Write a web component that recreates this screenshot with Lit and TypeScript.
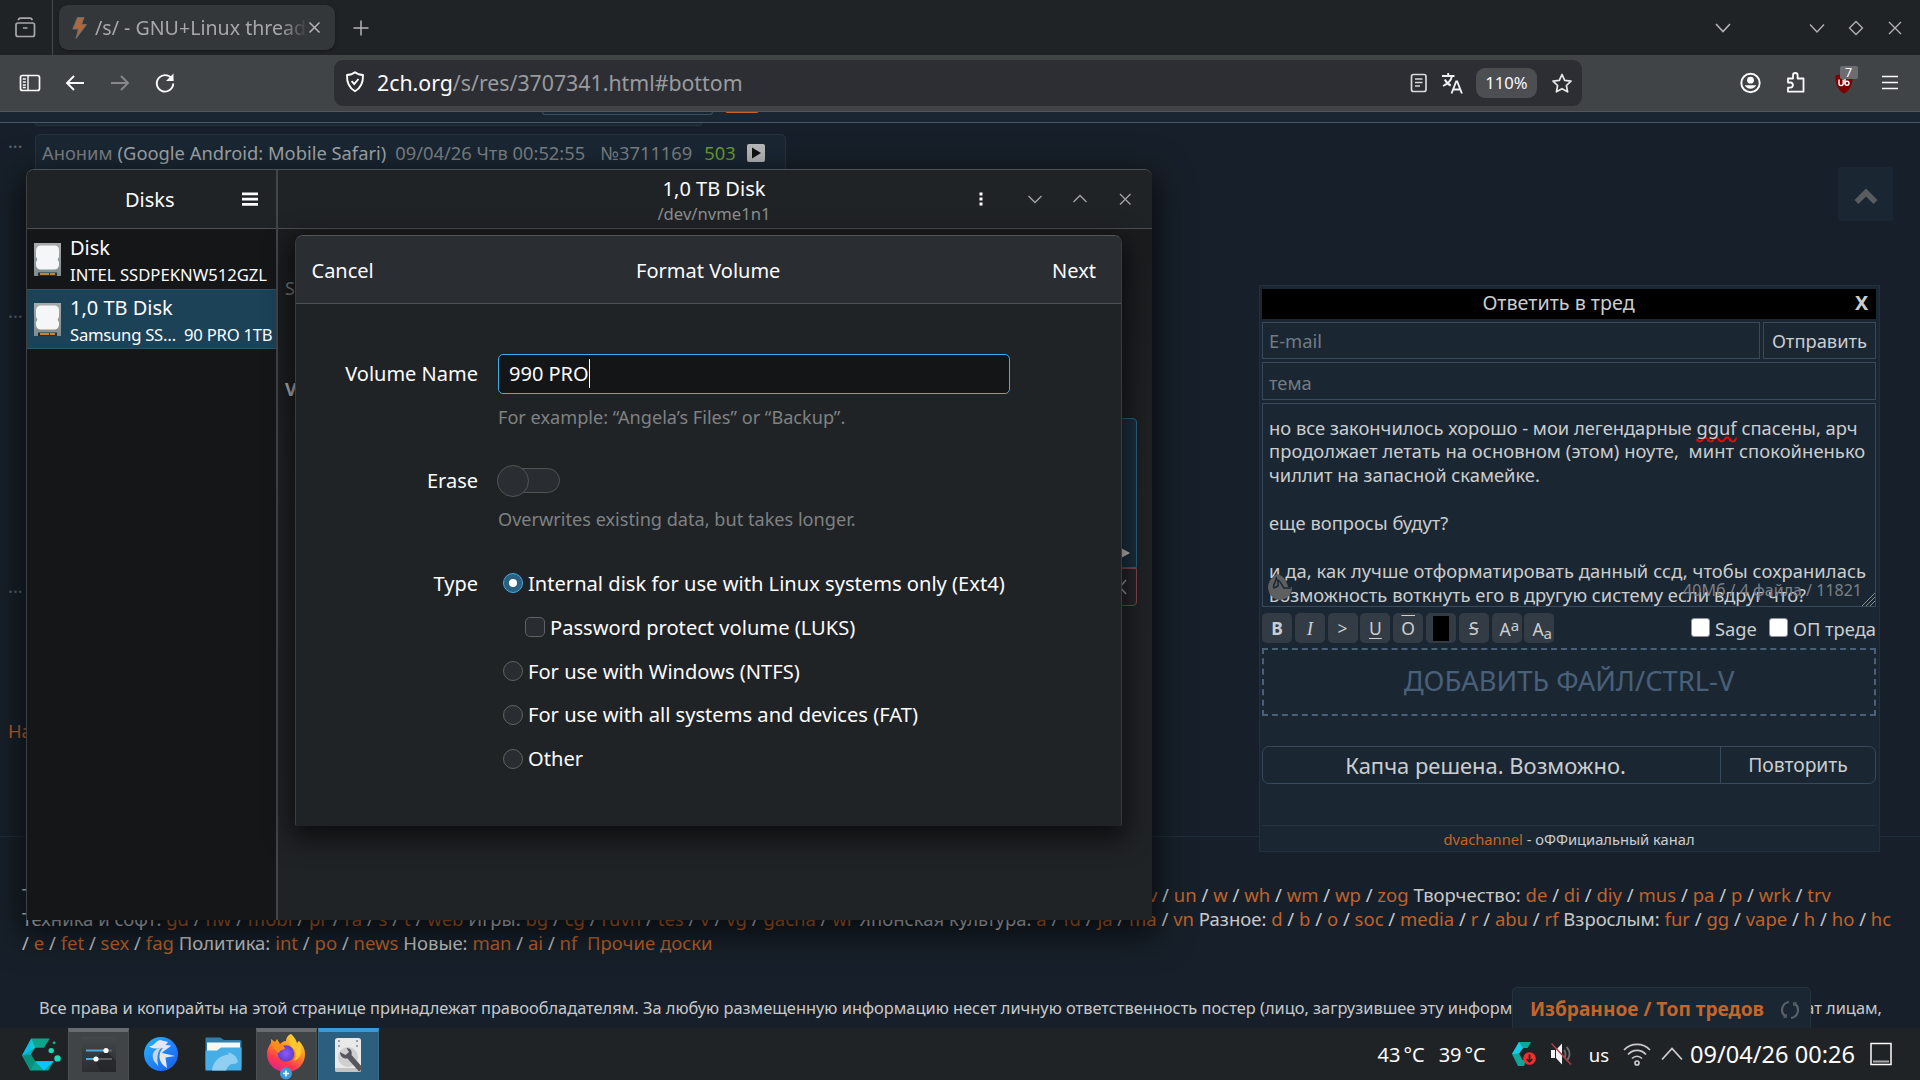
import { LitElement, html, css, nothing } from "lit";
import { customElement } from "lit/decorators.js";

const BOARDS_TAIL = "v un w wh wm wp zog|Творчество: de di diy mus pa p wrk trv";
const BOARDS_2 =
  "Техника и софт: gd hw mobi pr ra s t web|Игры: bg cg ruvn tes v vg gacha wr|Японская культура: a fd ja ma vn|Разное: d b o soc media r abu rf|Взрослым: fur gg vape h ho hc";
const BOARDS_3 = "/ e fet sex fag|Политика: int po news|Новые: man ai nf";

/* Turns "Title: a b c|Title: d e" into headed lists of board links. */
const boards = (src: string) =>
  src.split("|").map((group, gi) => {
    const m = group.match(/^([А-Яа-я ]+:|\/)?\s*(.*)$/)!;
    const links = m[2].split(" ");
    return html`${gi ? " " : nothing}${m[1] ? m[1] + " " : nothing}${links.map(
      (l, i) => html`${i ? " / " : nothing}<a>${l}</a>`
    )}`;
  });

@customElement("browser-chrome")
class BrowserChrome extends LitElement {
  static styles = css`
    :host { display: block; color: #a6a8a9; font-family: "Noto Sans", sans-serif; }
    svg { display: block; flex: none; }
    .tabs { height: 55px; background: #202326; display: flex; align-items: center; box-sizing: border-box; }
    .recent { width: 53px; height: 55px; border-right: 1px solid #46494c; display: flex; align-items: center; justify-content: center; padding-right: 2px; box-sizing: border-box; }
    .tab { margin-left: 6px; width: 276px; height: 45px; border-radius: 9px; background: #34373a; display: flex; align-items: center; padding: 0 13px 0 13px; box-sizing: border-box; box-shadow: 0 1px 3px #0006; }
    .title { width: 211px; margin-left: 8px; font-size: 19.6px; white-space: nowrap; overflow: hidden; -webkit-mask-image: linear-gradient(90deg, #000 88%, transparent 101%); mask-image: linear-gradient(90deg, #000 88%, transparent 101%); }
    .tab .x { margin-left: 2px; }
    .plus { margin-left: 17px; }
    .winbtns { margin-left: auto; display: flex; align-items: center; padding-right: 15px; }
    .winbtns svg + svg { margin-left: 19px; }
    .winbtns .list { margin-right: 56px; }
    .bar { height: 56px; background: #414446; border-bottom: 1px solid #55585a; display: flex; align-items: center; box-sizing: content-box; color: #fbfbfb; }
    .nav { display: flex; width: 334px; align-items: center; gap: 21px; padding-left: 18px; box-sizing: border-box; }
    .dim { color: #86888a; }
    .url { width: 1248px; height: 46px; border-radius: 9px; background: #2d2e33; display: flex; align-items: center; box-sizing: border-box; padding: 0 9px 0 9px; }
    .shield { margin-top: -3px; }
    .addr { margin: -2px 0 0 10px; font-size: 21.3px; color: #9a9b9d; white-space: pre; flex: 1; }
    .addr b { font-weight: 400; color: #fbfbfe; }
    .tr { margin-left: 13px; }
    .zoom { background: #4d4e52; width: 61px; height: 30px; border-radius: 9px; font-size: 16.6px; line-height: 30px; text-align: center; margin: 0 14px 0 12px; }
    .ext { display: flex; align-items: center; margin-left: auto; gap: 22.5px; padding-right: 18px; }
    .ublock { position: relative; display: flex; }
    .count { position: absolute; left: 8px; top: -5px; width: 18px; height: 13px; line-height: 13px; border-radius: 2px; background: #6b6d70; font-size: 12.5px; text-align: center; }
  `;
  render() {
    return html`
      <div class="tabs">
        <div class="recent">
          <svg width="24" height="24" viewBox="0 0 24 24" fill="none" stroke="currentColor" stroke-width="1.7"><rect x="3" y="7" width="18.500" height="13.500" rx="2"></rect><path d="M5.500 4.200q0-2 2-2h9.500q2 0 2 2M10 12h4.500"></path></svg>
        </div>
        <div class="tab">
          <svg width="15" height="22" viewBox="0 0 15 22"><path d="M5.500 0.500H12L9.500 7.500H14.500L4 21.500L6.500 12H0.800Z" fill="#b0673a" stroke="#6d6e70" stroke-width="1"></path></svg>
          <div class="title">/s/ - GNU+Linux thread</div>
          <svg class="x" width="13" height="13" viewBox="0 0 13 13" stroke="#b4b5b6" stroke-width="1.5"><path d="M1.500 1.500l10 10M11.500 1.500l-10 10"></path></svg>
        </div>
        <svg class="plus" width="18" height="18" viewBox="0 0 18 18" stroke="#b4b5b6" stroke-width="1.500"><path d="M9 1.500v15M1.500 9h15"></path></svg>
        <div class="winbtns">
          <svg class="list" width="18" height="18" viewBox="0 0 18 18" fill="none" stroke="#b4b5b6" stroke-width="1.600"><path d="M2 5l7 7.500L16 5"></path></svg>
          <svg width="20" height="18" viewBox="0 0 20 18" fill="none" stroke="#b4b5b6" stroke-width="1.300"><path d="M3 5.500l7 7.500L17 5.500"></path></svg>
          <svg width="20" height="18" viewBox="0 0 20 18" fill="none" stroke="#b4b5b6" stroke-width="1.300"><path d="M10 2.500l6.500 6.500L10 15.500L3.500 9Z"></path></svg>
          <svg width="20" height="18" viewBox="0 0 20 18" fill="none" stroke="#b4b5b6" stroke-width="1.300"><path d="M4 3l12 12M16 3L4 15"></path></svg>
        </div>
      </div>
      <div class="bar">
        <div class="nav">
          <svg width="24" height="18" viewBox="0 0 24 18" fill="none" stroke="currentColor" stroke-width="1.700"><rect x="2.500" y="1.500" width="19" height="15" rx="2"></rect><path d="M10 1.500v15M4.800 5h3M4.800 8h3M4.800 11h3M4.800 13.500h3" stroke-width="1.400"></path></svg>
          <svg width="24" height="24" viewBox="0 0 24 24" fill="none" stroke="currentColor" stroke-width="1.900"><path d="M21 12H4.500M11 5l-7 7l7 7"></path></svg>
          <svg class="dim" width="24" height="24" viewBox="0 0 24 24" fill="none" stroke="currentColor" stroke-width="1.900"><path d="M3 12h16.500M13 5l7 7l-7 7"></path></svg>
          <svg width="24" height="24" viewBox="0 0 24 24" fill="none" stroke="currentColor" stroke-width="1.900"><path d="M19.700 9.500A8.200 8.200 0 1 0 20.200 12.500"></path><path d="M20.500 2.500V10H13Z" fill="currentColor" stroke="none"></path></svg>
        </div>
        <div class="url">
          <svg class="shield" width="24" height="24" viewBox="0 0 24 24" fill="none" stroke="currentColor" stroke-width="1.900"><path d="M12 2.200c2.300 2 5 2.500 8 2.800c.3 7.500-2 12.800-8 16.300C6 17.800 3.700 12.500 4 5c3-.3 5.700-.8 8-2.800Z" stroke-linejoin="round"></path><path d="M8.600 11.200l2.600 2.800l4.300-5"></path></svg>
          <div class="addr"><b>2ch.org</b>/s/res/3707341.html#bottom</div>
          <svg width="18" height="20" viewBox="0 0 18 20" fill="none" stroke="#d8d8da" stroke-width="1.700"><rect x="1.500" y="1.500" width="14.500" height="17" rx="2"></rect><path d="M5 6h7.500M5 9.500h7.500M5 13h5" stroke-width="1.500"></path></svg>
          <svg class="tr" width="23" height="23" viewBox="0 0 23 23" fill="none" stroke="#f0f0f2" stroke-width="1.900"><g transform="translate(1 1)"><path d="M0 3h12.500M6.200 0v3M10 3c-1 5-4.500 8-9 10M2.800 6.500c1.500 3 3.500 5 6 6M9.500 20.500l4.700-12h1l4.700 12M11.200 16.500h7"></path></g></svg>
          <div class="zoom">110%</div>
          <svg width="22" height="21" viewBox="0 0 22 21" fill="none" stroke="#e8e8ea" stroke-width="1.700" stroke-linejoin="round"><path d="M11 1.500l2.700 5.800l6.300.8l-4.600 4.400l1.200 6.300L11 15.700l-5.600 3.100l1.200-6.300L2 8.100l6.300-.8Z"></path></svg>
        </div>
        <div class="ext">
          <svg width="24" height="24" viewBox="0 0 24 24" fill="none"><circle cx="11.500" cy="12" r="9.200" stroke="#fbfbfb" stroke-width="1.900"></circle><circle cx="11.500" cy="9.200" r="3.400" fill="#fbfbfb"></circle><path d="M5.800 14.300h11.400a6.500 6.500 0 0 1-11.400 0Z" fill="#fbfbfb"></path></svg>
          <svg width="24" height="24" viewBox="0 0 24 24" fill="none" stroke="#fbfbfb" stroke-width="1.800" stroke-linejoin="round"><path d="M3 7.500h5V4.300a2.300 2.300 0 0 1 4.600 0V7.500H18.500v13.200H3v-4h2.300a2.600 2.600 0 0 0 0-5.200H3Z"></path></svg>
          <div class="ublock">
            <svg width="24" height="24" viewBox="0 0 24 24"><path d="M12 2c2.500 1.600 5 2 8.500 2.200C21 13 18 19.500 12 22.500C6 19.500 3 13 3.500 4.200C7 4 9.500 3.600 12 2Z" fill="#800000"></path><path d="M7 8.500v4a2 2 0 0 0 4.200 0v-4M13 7v5.500" fill="none" stroke="#fff" stroke-width="1.400"></path><circle cx="15" cy="12.300" r="2" fill="none" stroke="#fff" stroke-width="1.400"></circle></svg>
            <div class="count">7</div>
          </div>
          <svg width="24" height="24" viewBox="0 0 24 24" stroke="#fbfbfb" stroke-width="1.700"><path d="M4 5.500h16M4 11.500h16M4 17.500h16"></path></svg>
        </div>
      </div>
    `;
  }
}

@customElement("thread-page")
class ThreadPage extends LitElement {
  static styles = css`
    :host { display: block; height: 916px; overflow: hidden; background: #17202a; color: #c7c9cb; font-family: "Noto Sans", sans-serif; font-size: 18.33px; position: relative; }
    .strip { height: 10px; background: #1a2733; border-bottom: 1px solid #44586a; display: flex; align-items: flex-start; }
    .search { margin-left: 542px; width: 171px; height: 3px; border: 1px solid #3c5063; border-top: 0; border-radius: 0 0 5px 5px; box-sizing: border-box; }
    .go { margin-left: 13px; width: 32px; height: 1px; background: #c4652a; border-radius: 0 0 4px 4px; }
    .prev { margin-left: 35px; width: 667px; height: 3px; background: #1a2733; border: 1px solid #26333f; border-top: 0; border-radius: 0 0 5px 5px; box-sizing: border-box; }
    .row { display: flex; margin-top: 8px; height: 156px; }
    .dots { width: 35px; box-sizing: border-box; padding-left: 8px; color: #5e666d; font-size: 18px; line-height: 14px; }
    .post { width: 751px; box-sizing: border-box; background: #1a2733; border: 1px solid #26333f; border-radius: 5px; color: #7c8083; height: 150px; padding: 0 6px; display: flex; align-items: flex-start; line-height: 36px; white-space: nowrap; }
    .who { color: #a4a7a9; margin: 0 9px 0 5px; }
    .no { margin-left: 15px; }
    .num { color: #6c9a3a; margin-left: 12px; }
    .play { margin: 9px 0 0 11px; }
    .col { display: flex; flex-direction: column; }
    .d2 { margin-top: 14px; height: 275px; padding-left: 8px; color: #5e666d; line-height: 14px; }
    .d3 { height: 140px; padding-left: 8px; color: #5e666d; line-height: 14px; }
    .back { padding-left: 8px; color: #b05f2a; line-height: 24px; height: 117px; }
    .rule { border-top: 1px solid #1e2d3a; height: 46px; }
    .boards { padding-left: 22px; line-height: 24px; height: 114px; width: 1890px; font-size: 18.490px; }
    .boards div { white-space: pre; }
    .l1 { display: flex; justify-content: space-between; width: 1809px; }
    .boards a, .back a { color: #bf632a; }
    .copy { font-size: 16.4px; line-height: 24px; white-space: nowrap; margin-top: -1px; }
    .c1 { display: flex; justify-content: space-between; padding: 0 38px 0 39px; }
    .c2 { text-align: center; }
    .top { position: absolute; left: 1838px; top: 55px; width: 55px; height: 54px; background: #1a2733; border-radius: 3px; display: flex; align-items: center; justify-content: center; padding-top: 4px; box-sizing: border-box; }
    .fav { position: absolute; left: 1512px; top: 875px; width: 299px; height: 50px; box-sizing: border-box; background: #1a2733; border: 1px solid #25333f; border-radius: 5px 5px 0 0; display: flex; align-items: flex-start; padding: 6px 10px 0 17px; color: #c4652a; font-weight: 700; font-size: 19.1px; line-height: 30px; white-space: nowrap; justify-content: space-between; }
    .fav svg { margin-top: 6px; }
    svg { display: block; }
  `;
  render() {
    return html`
      <div class="strip"><div class="search"></div><div class="go"></div></div>
      <div class="prev"></div>
      <div class="row">
        <div class="dots">...</div>
        <div class="post"><span>Аноним</span><span class="who">(Google Android: Mobile Safari)</span><span>09/04/26 Чтв 00:52:55</span><span class="no">№3711169</span><span class="num">503</span>
          <svg class="play" width="18" height="18" viewBox="0 0 18 18"><rect width="18" height="18" rx="2" fill="#b9babb"></rect><path d="M5 3.500L14 9L5 14.500Z" fill="#111"></path></svg></div>
      </div>
      <div class="col">
        <div class="d2">...</div>
        <div class="d3">...</div>
        <div class="back"><a>Назад</a></div>
      </div>
      <div class="rule"></div>
      <div class="boards">
        <div class="l1"><span>Тематика:</span><span>${boards(BOARDS_TAIL)}</span></div>
        <div>${boards(BOARDS_2)}</div>
        <div>${boards(BOARDS_3)}<a>  Прочие доски</a></div>
      </div>
      <div class="copy">
        <div class="c1"><span>Все права и копирайты на этой странице принадлежат правообладателям. За любую размещенную информацию несет личную ответственность постер (лицо, загрузившее эту информацию)</span><span>лежат лицам,</span></div>
        <div class="c2">отправившим их</div>
      </div>
      <div class="top"><svg width="24" height="20" viewBox="0 0 24 20" fill="none" stroke="#5a5d60" stroke-width="5.500"><path d="M2.500 16L12 6.500L21.500 16"></path></svg></div>
      <reply-form></reply-form>
      <div class="fav">Избранное / Топ тредов
        <svg width="20" height="20" viewBox="0 0 20 20" fill="none" stroke="#596066" stroke-width="2.200"><path d="M9 2A8 8 0 0 0 5.500 16.500M11 18A8 8 0 0 0 14.500 3.500"></path><path d="M3.500 17.500l3-.5l-.5-3M16.500 2.500l-3 .5l.5 3" stroke-width="1.200"></path></svg>
      </div>
    `;
  }
}

@customElement("reply-form")
class ReplyForm extends LitElement {
  static styles = css`
    :host { position: absolute; left: 1259px; top: 173px; width: 621px; height: 567px; box-sizing: border-box; border: 1px solid #22303c; background: #1a2733; padding: 3px 3px 0 2px; display: flex; flex-direction: column; color: #cbcdce; font-size: 18.33px; }
    .head, .r1, .subj, .area, .tools, .drop, .cap, .foot { flex: none; }
    .head { height: 30px; background: #000; display: flex; align-items: center; font-size: 19.700px; line-height: 28px; padding-bottom: 2px; box-sizing: border-box; }
    .head span { flex: 1; text-align: center; }
    .head b { width: 21px; font-size: 19.700px; }
    .r1 { display: flex; gap: 3px; margin-top: 3px; height: 37px; }
    .in { border: 1px solid #37495a; box-sizing: border-box; padding-left: 6px; display: flex; align-items: center; color: #747b82; font-size: 18.33px; }
    .mail { width: 498px; }
    .send { flex: 1; padding: 0; justify-content: center; color: #cbcdce; }
    .subj { margin-top: 3px; height: 38px; padding-top: 2px; }
    .area { margin-top: 3px; height: 204px; border: 1px solid #37495a; box-sizing: border-box; position: relative; padding: 11.500px 0 0 6px; line-height: 23.9px; font-size: 18.330px; overflow: hidden; }
    .area > div { white-space: pre; }
    .area .w { letter-spacing: 0.070px; }
    .sp { text-decoration: underline wavy #f00 1.5px; text-underline-offset: 1px; text-decoration-skip-ink: none; }
    .lim { position: absolute; right: 13px; bottom: 3px; color: #7a8086; font-size: 16px; }
    .grip { position: absolute; right: 0; bottom: 0; }
    .flame { position: absolute; left: 4px; bottom: 6px; }
    .tools { display: flex; height: 30px; margin-top: 6px; gap: 2.800px; align-items: center; }
    .t { width: 30px; height: 30px; box-sizing: border-box; border-radius: 5px; background: #333c44; text-align: center; line-height: 31px; font-size: 17.500px; white-space: nowrap; }
    .t i { font-family: "Liberation Serif", serif; font-size: 19px; }
    .t u { text-underline-offset: 3px; }
    .ov { text-decoration: overline; }
    .sw { display: flex; justify-content: center; align-items: center; }
    .sw span { width: 16px; height: 25px; background: #000; }
    .t sup, .t sub { font-size: 15px; line-height: 0; }
    .aa { text-align: left; padding-left: 8px; line-height: 33px; }
    .t sup { vertical-align: 5px; }
    .t sub { vertical-align: -3px; }
    .checks { margin-left: auto; display: flex; align-items: center; white-space: nowrap; font-size: 18.330px; }
    .cb { width: 19px; height: 19px; background: #fff; border: 1px solid #8f8f9d; border-radius: 3px; box-sizing: border-box; margin-right: 5px; margin-top: -2px; }
    .checks span + .cb { margin-left: 12px; }
    .drop { height: 68px; margin-top: 5px; border: 2px dashed #4a6079; box-sizing: border-box; display: flex; align-items: center; justify-content: center; font-size: 27.400px; color: #4a6079; padding-bottom: 3px; }
    .cap { margin-top: 30px; height: 38px; border: 1px solid #37495a; border-radius: 7px; box-sizing: border-box; display: flex; align-items: center; text-align: center; }
    .cap .a { width: 457px; box-sizing: border-box; padding-right: 12px; padding-top: 1px; font-size: 21.950px; }
    .cap .b { flex: 1; border-left: 1px solid #37495a; height: 36px; line-height: 35px; font-size: 19.300px; }
    .foot { margin-top: 41px; border-top: 1px solid #25333f; text-align: center; font-size: 14.700px; line-height: 26px; height: 26px; }
    .foot a { color: #c4652a; }
  `;
  render() {
    return html`
      <div class="head"><span>Ответить в тред</span><b>X</b></div>
      <div class="r1"><div class="in mail">E-mail</div><div class="in send">Отправить</div></div>
      <div class="in subj">тема</div>
      <div class="area"><div>но все закончилось хорошо - мои легендарные <span class="sp">gguf</span> спасены, арч</div><div class="w">продолжает летать на основном (этом) ноуте,  минт спокойненько</div><div>чиллит на запасной скамейке.</div><div>&nbsp;</div><div>еще вопросы будут?</div><div>&nbsp;</div><div class="w">и да, как лучше отформатировать данный ссд, чтобы сохранилась</div><div>возможность воткнуть его в другую систему если вдруг что?</div>
        <div class="lim">40Мб / 4 файла / 11821</div>
        <svg class="flame" width="26" height="26" viewBox="0 0 26 26" fill="#5e5f60"><path d="M10 0C15 1 20 6 21 13l4 0c.5 8-6 13-12.500 13C6 25.500 1 20 1 13C1 9 4 3 10 0Z"></path><path d="M9 3c2 3-4 7-2 11l4-2v-6c3 2 4 5 6 8l7 0" stroke="#1a2733" stroke-width="1.500" fill="none"></path></svg>
        <svg class="grip" width="14" height="14" viewBox="0 0 14 14" stroke="#8b9094" stroke-width="1"><path d="M1 14L14 1M5 14L14 5M9 14L14 9"></path></svg>
      </div>
      <div class="tools">
        <div class="t"><b>B</b></div><div class="t"><i>I</i></div><div class="t">&gt;</div><div class="t"><u>U</u></div>
        <div class="t ov">O</div><div class="t sw"><span></span></div><div class="t"><s>S</s></div>
        <div class="t aa">A<sup>a</sup></div><div class="t aa">A<sub>a</sub></div>
        <div class="checks"><div class="cb"></div><span>Sage</span><div class="cb"></div><span>ОП треда</span></div>
      </div>
      <div class="drop">ДОБАВИТЬ ФАЙЛ/CTRL-V</div>
      <div class="cap"><div class="a">Капча решена. Возможно.</div><div class="b">Повторить</div></div>
      <div class="foot"><a>dvachannel</a> - оФФициальный канал</div>
    `;
  }
}

const drive = html`<svg class="drive" width="27" height="33" viewBox="0 0 27 33"><defs><linearGradient id="dg" x1="0" y1="0" x2="0" y2="1"><stop offset="0" stop-color="#a9abac"></stop><stop offset="1" stop-color="#7f8c8d"></stop></linearGradient></defs><rect width="27" height="33" fill="url(#dg)"></rect><path d="M6 2.500h15Q25 3 25 7v7q-2.500 2.500 0 5v3q-.5 4-4 4.500H6Q2.500 26 2 22v-3q2.500-2.500 0-5V7Q2.500 3 6 2.500Z" fill="#f4f6f7"></path><rect x="4" y="29.500" width="19" height="3.500" fill="#2c2f31"></rect><path d="M6 31h9M16 31h5" stroke="#f0a63c" stroke-width="1.300"></path></svg>`;

@customElement("disks-window")
class DisksWindow extends LitElement {
  static styles = css`
    :host { position: absolute; left: 26px; top: 169px; width: 1126px; height: 751px; display: flex; background: #202326; border-radius: 8px 8px 0 0; overflow: visible; box-shadow: 0 10px 34px 6px #0009; box-sizing: border-box; border: 1px solid #3d4144; border-top-color: #4c5154; border-bottom: 0; border-right: 0; color: #fcfcfc; font-family: "Noto Sans", sans-serif; font-size: 20px; }
    svg { display: block; flex: none; }
    .side { width: 249px; border-right: 2px solid #434649; background: #151618; border-radius: 8px 0 0 0; overflow: hidden; }
    .head { height: 58px; border-bottom: 1px solid #4c4f52; background: #202326; display: flex; align-items: center; box-sizing: content-box; }
    .main .head { border-radius: 0 8px 0 0; }
    .side .head span { margin-left: 98px; width: 117px; }
    .row { height: 60px; display: flex; padding: 5px 0 0 7px; box-sizing: border-box; }
    .sel { background: #1c4257; box-shadow: inset 0 1px #28556c, inset 0 -1px #28556c; }
    .drive { margin: 9px 9px 0 0; }
    .nm { line-height: 27px; white-space: pre; }
    .sub { font-size: 16.670px; line-height: 27px; white-space: pre; }
    .sel .sub { letter-spacing: -0.250px; }
    .main { flex: 1; min-width: 0; }
    .ttl { flex: 1; text-align: center; padding: 7px 0 0 179px; }
    .ttl div:first-child { line-height: 25px; margin-top: -3px; }
    .dev { font-size: 16.670px; line-height: 26px; color: #8c8e8f; }
    .btns { display: flex; align-items: center; padding-right: 17px; gap: 25px; color: #a3a5a6; }
    .btns svg:first-child { margin-right: 9px; }
    .body { height: 691px; display: flex; justify-content: space-between; background: linear-gradient(#1a1c1e, #1f2224 40%, #202326); overflow: hidden; }
    .hid { padding: 46px 0 0 7px; line-height: 26px; color: #77797b; font-size: 18px; }
    .hid b { display: block; margin-top: 75px; color: #b8b9ba; }
    .vol { width: 60px; margin: 189px 15px 0 0; display: flex; flex-direction: column; }
    .part { height: 150px; background: #1b303d; border: 1px solid #2a6180; box-sizing: border-box; border-radius: 0 4px 0 0; display: flex; align-items: flex-end; justify-content: flex-end; padding: 0 6px 9px 0; }
    .del { height: 38px; border: 1px solid #84464b; box-sizing: border-box; background: #26262a; border-radius: 0 0 4px 0; display: flex; align-items: center; justify-content: flex-end; padding-right: 9px; }
  `;
  render() {
    return html`
      <div class="side">
        <div class="head"><span>Disks</span><svg width="16" height="14" viewBox="0 0 16 14" fill="#fcfcfc"><path d="M0 .5h16v2.700H0zM0 5.700h16v2.700H0zM0 11h16v2.700H0z"></path></svg></div>
        <div class="row">${drive}<div><div class="nm">Disk</div><div class="sub">INTEL SSDPEKNW512GZL</div></div></div>
        <div class="row sel">${drive}<div><div class="nm">1,0 TB Disk</div><div class="sub">Samsung SS…  90 PRO 1TB</div></div></div>
      </div>
      <div class="main">
        <div class="head">
          <div class="ttl"><div>1,0 TB Disk</div><div class="dev">/dev/nvme1n1</div></div>
          <div class="btns">
            <svg width="20" height="16" viewBox="0 0 20 16" fill="#fcfcfc"><path d="M8.500 1.500h3v3h-3zM8.500 6.500h3v3h-3zM8.500 11.500h3v3h-3z"></path></svg>
            <svg width="20" height="16" viewBox="0 0 20 16" fill="none" stroke="currentColor" stroke-width="1.300"><path d="M3.500 5l6.500 6.500L16.500 5"></path></svg>
            <svg width="20" height="16" viewBox="0 0 20 16" fill="none" stroke="currentColor" stroke-width="1.300"><path d="M3.500 11L10 4.500L16.500 11"></path></svg>
            <svg width="20" height="16" viewBox="0 0 20 16" fill="none" stroke="currentColor" stroke-width="1.300"><path d="M5 3l10.500 10.500M15.500 3L5 13.500"></path></svg>
          </div>
        </div>
        <div class="body">
          <div class="hid">Size<b>Volumes</b></div>
          <div class="vol">
            <div class="part"><svg width="9" height="10" viewBox="0 0 9 10" fill="#c8cacb"><path d="M0 0L9 5L0 10Z"></path></svg></div>
            <div class="del"><svg width="14" height="16" viewBox="0 0 14 16" fill="none" stroke="#a3a5a6" stroke-width="1.400"><path d="M1 1l12 14M13 1L1 15"></path></svg></div>
          </div>
        </div>
      </div>
    `;
  }
}

const TYPES: [string, string][] = [
  ["radio on", "Internal disk for use with Linux systems only (Ext4)"],
  ["check", "Password protect volume (LUKS)"],
  ["radio", "For use with Windows (NTFS)"],
  ["radio", "For use with all systems and devices (FAT)"],
  ["radio", "Other"],
];

@customElement("format-dialog")
class FormatDialog extends LitElement {
  static styles = css`
    :host { position: absolute; left: 295px; top: 235px; width: 827px; height: 591px; box-sizing: border-box; border: 1px solid #3a3d40; border-top-color: #515457; border-bottom: 0; border-radius: 8px 8px 2px 2px; background: #202326; overflow: visible; box-shadow: 0 8px 26px 4px #000000a6; color: #fcfcfc; font-family: "Noto Sans", sans-serif; font-size: 20px; }
    .head { height: 68px; background: #2a2d31; border-bottom: 1px solid #4e5154; border-radius: 7px 7px 0 0; display: grid; grid-template-columns: 1fr auto 1fr; align-items: center; padding: 1px 25px 0 15.5px; box-sizing: border-box; }
    .head span:nth-child(2) { padding-left: 9px; }
    .head span:last-child { text-align: right; }
    .grid { display: grid; grid-template-columns: 182px 512px; column-gap: 20px; align-items: center; }
    .lab { text-align: right; }
    .r1 { margin-top: 50px; }
    .r1 .lab { padding-bottom: 1px; }
    .entry { height: 40px; border: 1px solid #3daee9; border-radius: 5px; background: #141517; box-sizing: border-box; display: flex; align-items: center; padding: 0 0 1px 10px; }
    .caret { width: 1px; height: 29px; background: #fff; }
    .hint { margin: 12px 0 0 202px; font-size: 18.140px; line-height: 22px; color: #7f8182; white-space: nowrap; }
    .r2 { margin-top: 36px; }
    .sw { width: 63px; height: 25px; border: 1px solid #505356; background: #292c30; border-radius: 13px; box-sizing: border-box; display: flex; align-items: center; margin: 4px 0 3px -1px; }
    .knob { width: 32px; height: 32px; border-radius: 50%; box-sizing: border-box; background: #2a2d32; border: 1px solid #505356; flex: none; margin-left: -1px; }
    .r3 { margin-top: 32px; align-items: start; }
    .r3 .lab, .opt { height: 43.800px; line-height: 43.800px; }
    .opt { display: flex; align-items: center; white-space: nowrap; padding-left: 5px; font-size: 20.120px; }
    .box { width: 20px; height: 20px; box-sizing: border-box; border: 1px solid #606366; background: #292c30; border-radius: 50%; margin: -1px 5px 0 0; display: flex; align-items: center; justify-content: center; }
    .opt.check { padding-left: 27px; }
    .check .box { border-radius: 5px; margin-right: 5px; }
    .on .box { background: #2b607f; border-color: #3daee9; }
    .on .box::after { content: ""; width: 8px; height: 8px; border-radius: 50%; background: #fff; }
  `;
  render() {
    return html`
      <div class="head"><span>Cancel</span><span>Format Volume</span><span>Next</span></div>
      <div class="grid r1"><div class="lab">Volume Name</div><div class="entry">990 PRO<div class="caret"></div></div></div>
      <div class="hint">For example: “Angela’s Files” or “Backup”.</div>
      <div class="grid r2"><div class="lab">Erase</div><div class="sw"><div class="knob"></div></div></div>
      <div class="hint">Overwrites existing data, but takes longer.</div>
      <div class="grid r3"><div class="lab">Type</div><div>${TYPES.map(([k, t]) => html`<div class="opt ${k}"><div class="box"></div>${t}</div>`)}</div></div>
    `;
  }
}

const cachy = html`<svg width="40" height="33" viewBox="0 0 40 34">
  <path d="M10 0.500H29L23 10H14L9.500 17L14 24H33L27.500 33.500H9L0.500 18Z" fill="#0aa58c"></path>
  <path d="M10 0.500L14 10L0.500 18Z" fill="#14c8d8"></path><path d="M0.500 18L9.500 17L14 24L9 33.500Z" fill="#0b8f7c"></path>
  <path d="M14 24H33L23 33.500Z" fill="#08c4ff"></path><path d="M.5 18L10 .5L9.500 17Z" fill="#06b6e8" opacity=".6"></path>
  <circle cx="33.500" cy="5" r="1.500" fill="#0bb796"></circle><circle cx="30.500" cy="13" r="2.800" fill="#12e0bb"></circle><circle cx="37" cy="21" r="3.300" fill="#12e0bb"></circle>
</svg>`;

@customElement("task-bar")
class TaskBar extends LitElement {
  static styles = css`
    :host { display: flex; height: 52px; background: #202326; color: #fcfcfc; font-family: "Noto Sans", sans-serif; font-size: 20px; overflow: hidden; }
    svg { display: block; flex: none; }
    .apps { display: flex; padding-left: 17px; }
    .app { width: 51px; height: 52px; display: flex; align-items: center; justify-content: center; box-sizing: border-box; }
    .start { padding-right: 4px; }
    .run { width: 61px; background: #414446; border: 1px solid #4c4f52; border-top: 4px solid #696c6e; border-bottom: 0; padding-bottom: 4px; }
    .run.ff { padding-bottom: 0; padding-right: 1px; }
    .act { width: 61px; background: #2b5f7d; border: 1px solid #336c8c; border-top: 4px solid #3a9bd6; border-bottom: 0; padding-bottom: 2px; margin-left: 1px; }
    .app.kf { margin-left: 6px; }
    .app.fo { margin-left: 12px; margin-right: 7px; }
    .tray { margin-left: auto; display: flex; align-items: center; padding-right: 28px; white-space: nowrap; }
    .temp { font-size: 20px; margin-right: 14px; }
    .temp + .temp { margin-right: 25px; }
    .temp small { font-size: 20px; margin-left: 3px; }
    .mute { margin-left: 12px; }
    .up { margin-left: 9px; }
    .clock { font-size: 23.600px; margin: 0 15px 0 7px; }
    .us { font-size: 18.500px; margin: 0 13px 0 16px; }
  `;
  render() {
    return html`
      <div class="apps">
        <div class="app start">${cachy}</div>
        <div class="app run"><svg width="34" height="35" viewBox="0 0 34 35"><defs><linearGradient id="st" x1="0" y1="0" x2="0" y2="1"><stop offset="0" stop-color="#44484b"></stop><stop offset="1" stop-color="#2a2c2f"></stop></linearGradient></defs><rect width="34" height="35" rx="1" fill="url(#st)"></rect><path d="M24 13L34 24V35H19L12 22Z" fill="#232527" opacity=".7"></path><path d="M4 13.500h20M4 22h10" stroke="#4da6dd" stroke-width="2"></path><path d="M24 13.500h6M14 22h16" stroke="#5b5f62" stroke-width="2"></path><circle cx="24" cy="13.500" r="2.600" fill="#fff"></circle><circle cx="14" cy="22" r="2.600" fill="#fff"></circle></svg></div>
        <div class="app kf"><svg width="34" height="34" viewBox="0 0 34 34"><defs><linearGradient id="kg" x1="0" y1="0" x2="1" y2="1"><stop offset="0" stop-color="#27b7ff"></stop><stop offset="1" stop-color="#1b57f0"></stop></linearGradient></defs><circle cx="17" cy="17" r="17" fill="url(#kg)"></circle><path d="M5 9.500C10 9 12 4 16 3L24 5L21.500 8L27 8.500C24 12 20 13 18 16L31 19L21.500 20.500L23 31C18 28 15.500 24 15.500 19.500C15.500 16 17 13 19 11C14 12 9 12 5 9.500Z" fill="#e4e8ec"></path><path d="M18 10C9 12 7 18 10 24L14.500 29.500C12.500 22 13 14 18 10Z" fill="#cdd5dc"></path></svg></div>
        <div class="app fo"><svg width="37" height="34" viewBox="0 0 37 34"><path d="M0.500 1.500Q.5.500 1.500.500H15L19 3H35Q36.500 3 36.500 4.500V30H.5Z" fill="#2f7fae"></path><rect x="2" y="5.500" width="33" height="12" fill="#f7f8f9"></rect><path d="M.5 13.500H12L16 10.500H36.500V33.500H.5Z" fill="#46aee6"></path><path d="M7 33.500C8 24 15 18 24 17.500L23 15.500C27 16 32 19 33 25L30 27C26 26 23 28 21 33.500Z" fill="#8fd0f2"></path></svg></div>
        <div class="app run ff"><svg width="40" height="48" viewBox="0 0 40 48"><defs><linearGradient id="fx" x1=".8" y1="0" x2=".3" y2="1"><stop offset="0" stop-color="#ffe03a"></stop><stop offset=".4" stop-color="#ff9320"></stop><stop offset=".75" stop-color="#ff3750"></stop><stop offset="1" stop-color="#e0238f"></stop></linearGradient><radialGradient id="fp"><stop offset="0" stop-color="#9059ff"></stop><stop offset="1" stop-color="#5b3fc8"></stop></radialGradient></defs>
          <path d="M25 2C28 5 30 7 31 11L33 9C37 13 39 17 39 22C39 33 31 40 20 40S1 32 1 22C1 17 3 14 5 11L5 7L9 10L11 7L14 12C16 10 18 9 20 9C20 6 22 3 25 2Z" fill="url(#fx)"></path><circle cx="20" cy="21.500" r="8.300" fill="url(#fp)"></circle><path d="M5 11C8 12 11 12 14 12C17 13 19 15 19 17C16 18 14 18 13 21C10 19 7 17 5 11Z" fill="#ff8a1c"></path><path d="M24 3C22 9 23 13 28 17C31 21 30 26 27 29C35 27 38 19 33 9L31 12Z" fill="#ffc62e"></path>
          <circle cx="20" cy="41.500" r="6" fill="#3a9bd6"></circle><path d="M20 38.500v6M17 41.500h6" stroke="#fff" stroke-width="1.600"></path></svg></div>
        <div class="app act"><svg width="30" height="36" viewBox="0 0 30 36"><rect x="1" y="1" width="26" height="34" rx="2.500" fill="#e9e9e9"></rect><path d="M1 31h26v2a2 2 0 0 1-2 2H3a2 2 0 0 1-2-2Z" fill="#c4c4c4"></path><circle cx="14" cy="20" r="10" fill="#cfcfcf"></circle><path d="M4 4h2M22 4h2M4 9h2M22 9h2" stroke="#888" stroke-width="1.500"></path><path d="M6 15c0 5 4 7 7.500 6.500L25 34.500l4-3.500L17.500 18c1-4-1-7-5-7l2.500 4l-3.500 3Z" fill="#56575e"></path></svg></div>
      </div>
      <div class="tray">
        <span class="temp">43<small>°C</small></span><span class="temp">39<small>°C</small></span>
        <svg width="26" height="26" viewBox="0 0 26 26"><path d="M8 1H20L16.500 7H12L8 12.500L11.500 19H15L13 25H7L1 13Z" fill="#0fa898"></path><path d="M1 13L8 1L12 7L8 12.500Z" fill="#19cbe6"></path><circle cx="18.500" cy="17.500" r="6.300" fill="#ee2f2b"></circle><path d="M18.500 13.500v7M15.700 18l2.800 2.800L21.300 18" stroke="#202326" stroke-width="1.700" fill="none"></path></svg>
        <svg class="mute" width="24" height="24" viewBox="0 0 24 24"><path d="M2 8h4v8H2zM7 8l6-6.500v21L7 16Z" fill="#f4f4f4"></path><path d="M15 8c2 2 2 6 0 8M17.500 5c4 4 4 10 0 14" stroke="#6c6f71" stroke-width="1.800" fill="none"></path><path d="M2.500 1.500L22 22.500" stroke="#b23b47" stroke-width="1.500"></path></svg>
        <span class="us">us</span>
        <svg width="30" height="26" viewBox="0 0 30 26" fill="none" stroke="#c9cacb" stroke-width="1.700"><path d="M2 9C9 1.500 21 1.500 28 9M6 13.500c5-5.500 13-5.500 18 0M10 17.500c3-3 7-3 10 0"></path><circle cx="15" cy="22" r="2"></circle></svg>
        <svg class="up" width="22" height="14" viewBox="0 0 22 14" fill="none" stroke="#d0d1d2" stroke-width="1.700"><path d="M1 12.500L11 1.500L21 12.500"></path></svg>
        <span class="clock">09/04/26 00:26</span>
        <svg width="22" height="24" viewBox="0 0 22 24" fill="none" stroke="#fcfcfc" stroke-width="1.500"><rect x="1" y="1.500" width="20" height="21"></rect><path d="M3 19.500h16" stroke="#aaa" stroke-width="2"></path></svg>
      </div>
    `;
  }
}

@customElement("app-root")
class AppRoot extends LitElement {
  static styles = css`
    :host { display: flex; flex-direction: column; position: relative; width: 1920px; height: 1080px; overflow: hidden; background: #17202a; }
    task-bar { position: relative; z-index: 2; }
  `;
  render() {
    return html`<browser-chrome></browser-chrome><thread-page></thread-page><disks-window></disks-window><format-dialog></format-dialog><task-bar></task-bar>`;
  }
}
